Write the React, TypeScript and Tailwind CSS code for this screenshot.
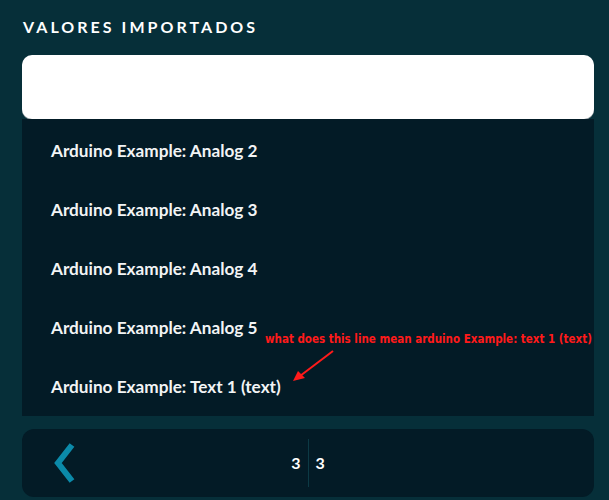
import { useState } from 'react'

const items = [
  'Arduino Example: Analog 2',
  'Arduino Example: Analog 3',
  'Arduino Example: Analog 4',
  'Arduino Example: Analog 5',
  'Arduino Example: Text 1 (text)',
]

export default function App() {
  const [page] = useState(3)
  const [total] = useState(3)

  return (
    <div className="w-[609px] h-[500px] bg-[#062f39] overflow-hidden pl-[22px] pr-[15px]" style={{ fontFamily: 'Lato, "Open Sans", sans-serif' }}>
      {/* Header */}
      <div className="h-[55px] pt-[17px] pl-[1px]">
        <h1 className="text-[16px] leading-[20px] font-bold tracking-[0.19em] text-white">VALORES IMPORTADOS</h1>
      </div>

      {/* Search box */}
      <div className="h-[64px] bg-white rounded-[10px] shadow-[0_1px_0_#8a9499]" />

      {/* List */}
      <div className="relative bg-[#031b26] pt-[2px]">
        {items.map((item) => (
          <div key={item} className="h-[59px] flex items-center pl-[29px] text-[17.2px] font-bold text-[#f2f4f5]">
            {item}
          </div>
        ))}

        {/* Annotation */}
        <div className="absolute left-[243px] top-[212px] text-[11.5px] font-bold text-[#ff1a1a] whitespace-nowrap" style={{ fontFamily: '"DejaVu Sans Condensed", "DejaVu Sans", sans-serif' }}>
          what does this line mean arduino Example: text 1 (text)
        </div>
        <svg className="absolute left-[266px] top-[228px]" width="50" height="40" viewBox="0 0 50 40">
          <line x1="45" y1="4" x2="12" y2="29" stroke="#ff1a1a" strokeWidth="2" />
          <polygon points="5,34 10,24 17,31" fill="#ff1a1a" />
        </svg>
      </div>

      {/* Pagination */}
      <div className="mt-[13px] h-[68px] bg-[#031b26] rounded-[12px] grid grid-cols-[1fr_auto_1fr] items-center">
        <div className="pl-[32px] flex items-center">
          <button className="flex">
            <svg width="24" height="40" viewBox="0 0 24 40">
              <polyline points="18,2 4,20 18,38" fill="none" stroke="#0b8aa9" strokeWidth="6" />
            </svg>
          </button>
        </div>
        <div className="h-[48px] flex items-stretch text-[16px] font-bold text-white">
          <span className="flex items-center pr-[7px]">{page}</span>
          <span className="w-px bg-[#0c3a45]" />
          <span className="flex items-center pl-[7px]">{total}</span>
        </div>
        <div />
      </div>
    </div>
  )
}
